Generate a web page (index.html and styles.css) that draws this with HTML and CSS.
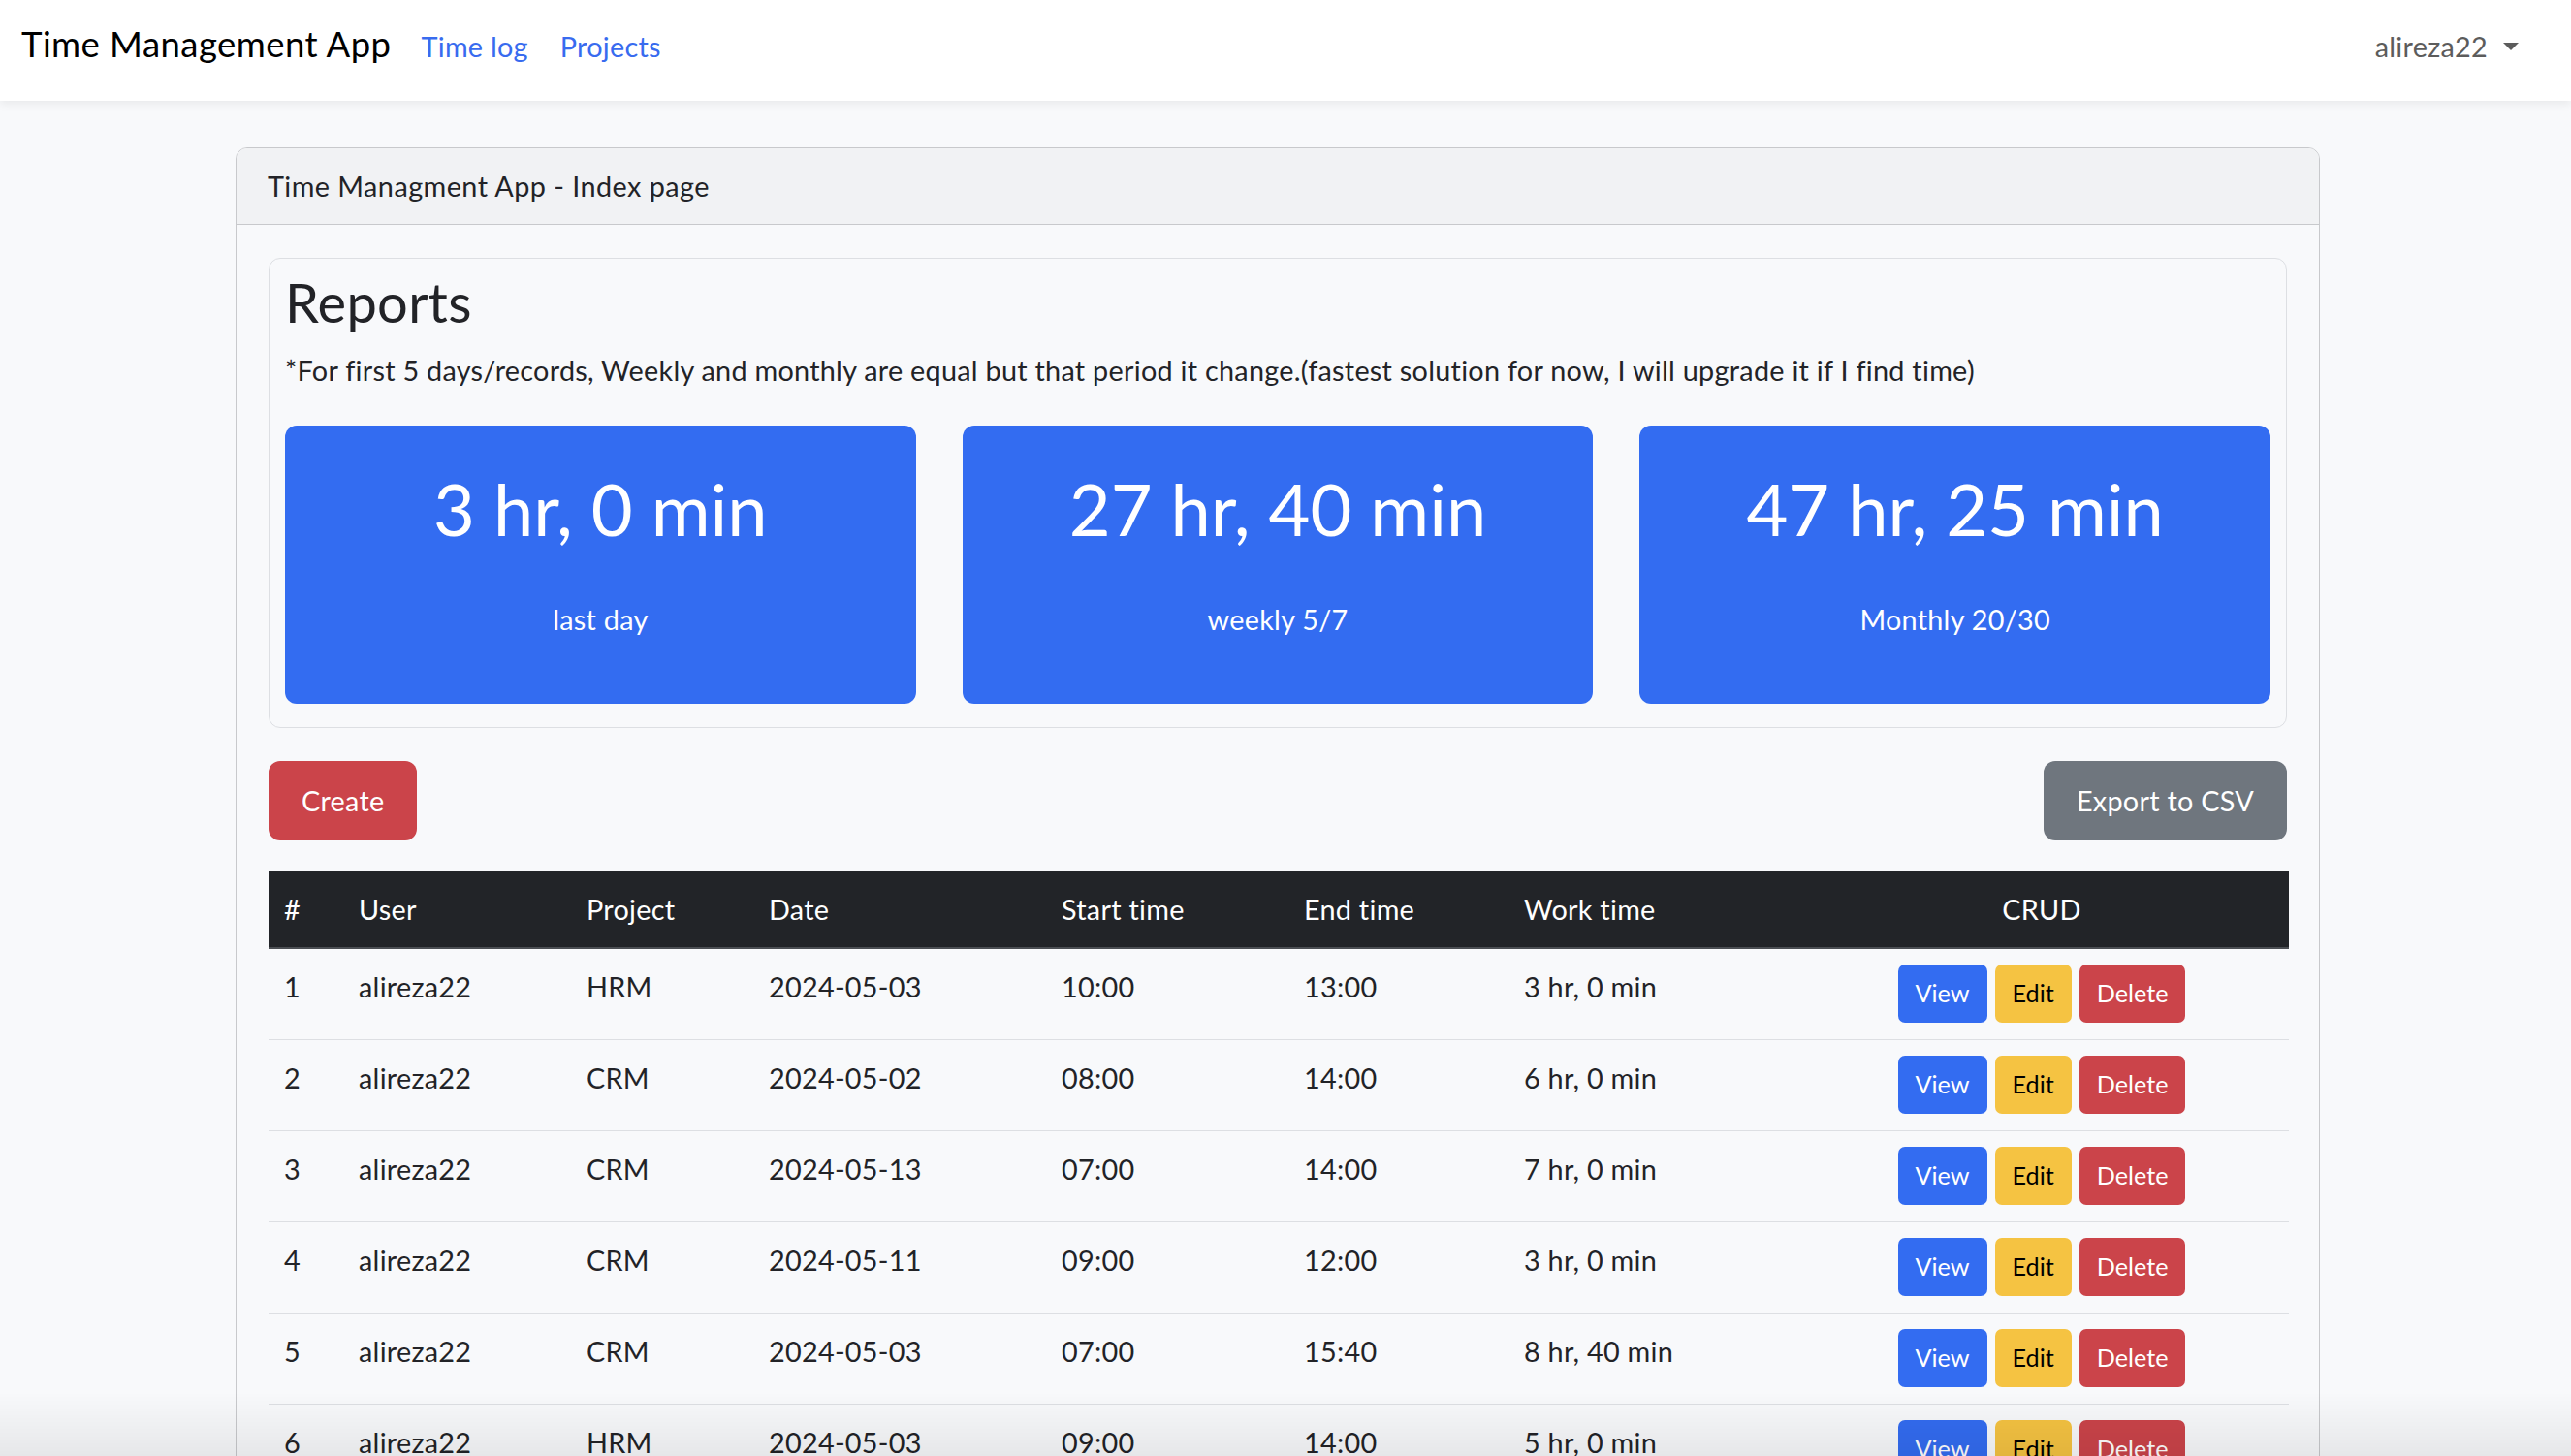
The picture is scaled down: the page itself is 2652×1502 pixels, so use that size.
FILE: index.html
```html
<!DOCTYPE html>
<html lang="en">
<head>
<meta charset="utf-8">
<title>Time Management App</title>
<link rel="stylesheet" href="styles.css">
</head>
<body>
<nav class="navbar">
  <a class="brand" href="#">Time Management App</a>
  <a class="nav-link" href="#">Time log</a>
  <a class="nav-link" href="#">Projects</a>
  <a class="user-toggle" href="#">alireza22</a>
</nav>

<main class="main">
  <section class="card">
    <div class="card-header">Time Managment App - Index page</div>
    <div class="card-body">
      <div class="reports">
        <h3 class="reports-title">Reports</h3>
        <p class="reports-note">*For first 5 days/records, Weekly and monthly are equal but that period it change.(fastest solution for now, I will upgrade it if I find time)</p>
        <div class="stats">
          <div class="stat">
            <div class="stat-value">3 hr, 0 min</div>
            <div class="stat-label">last day</div>
          </div>
          <div class="stat">
            <div class="stat-value">27 hr, 40 min</div>
            <div class="stat-label">weekly 5/7</div>
          </div>
          <div class="stat">
            <div class="stat-value">47 hr, 25 min</div>
            <div class="stat-label">Monthly 20/30</div>
          </div>
        </div>
      </div>

      <div class="actions">
        <a class="btn btn-danger" href="#">Create</a>
        <a class="btn btn-secondary" href="#">Export to CSV</a>
      </div>

      <table class="table">
        <colgroup>
          <col class="c-num"><col class="c-user"><col class="c-project"><col class="c-date">
          <col class="c-start"><col class="c-end"><col class="c-work"><col class="c-crud">
        </colgroup>
        <thead>
          <tr><th>#</th><th>User</th><th>Project</th><th>Date</th><th>Start time</th><th>End time</th><th>Work time</th><th class="center">CRUD</th></tr>
        </thead>
        <tbody>
          <tr><td>1</td><td>alireza22</td><td>HRM</td><td>2024-05-03</td><td>10:00</td><td>13:00</td><td>3 hr, 0 min</td>
            <td><div class="crud"><a class="sbtn sbtn-view" href="#">View</a><a class="sbtn sbtn-edit" href="#">Edit</a><a class="sbtn sbtn-delete" href="#">Delete</a></div></td></tr>
          <tr><td>2</td><td>alireza22</td><td>CRM</td><td>2024-05-02</td><td>08:00</td><td>14:00</td><td>6 hr, 0 min</td>
            <td><div class="crud"><a class="sbtn sbtn-view" href="#">View</a><a class="sbtn sbtn-edit" href="#">Edit</a><a class="sbtn sbtn-delete" href="#">Delete</a></div></td></tr>
          <tr><td>3</td><td>alireza22</td><td>CRM</td><td>2024-05-13</td><td>07:00</td><td>14:00</td><td>7 hr, 0 min</td>
            <td><div class="crud"><a class="sbtn sbtn-view" href="#">View</a><a class="sbtn sbtn-edit" href="#">Edit</a><a class="sbtn sbtn-delete" href="#">Delete</a></div></td></tr>
          <tr><td>4</td><td>alireza22</td><td>CRM</td><td>2024-05-11</td><td>09:00</td><td>12:00</td><td>3 hr, 0 min</td>
            <td><div class="crud"><a class="sbtn sbtn-view" href="#">View</a><a class="sbtn sbtn-edit" href="#">Edit</a><a class="sbtn sbtn-delete" href="#">Delete</a></div></td></tr>
          <tr><td>5</td><td>alireza22</td><td>CRM</td><td>2024-05-03</td><td>07:00</td><td>15:40</td><td>8 hr, 40 min</td>
            <td><div class="crud"><a class="sbtn sbtn-view" href="#">View</a><a class="sbtn sbtn-edit" href="#">Edit</a><a class="sbtn sbtn-delete" href="#">Delete</a></div></td></tr>
          <tr><td>6</td><td>alireza22</td><td>HRM</td><td>2024-05-03</td><td>09:00</td><td>14:00</td><td>5 hr, 0 min</td>
            <td><div class="crud"><a class="sbtn sbtn-view" href="#">View</a><a class="sbtn sbtn-edit" href="#">Edit</a><a class="sbtn sbtn-delete" href="#">Delete</a></div></td></tr>
        </tbody>
      </table>
    </div>
  </section>
</main>

<div class="bottom-fade"></div>
</body>
</html>
```

FILE: styles.css
```css
* { box-sizing: border-box; }

html, body {
  margin: 0;
  padding: 0;
}

body {
  background: #f8f9fb;
  color: #222327;
  font-family: Lato, "Noto Sans", "Liberation Sans", sans-serif;
  font-size: 28.8px;
  line-height: 1.6;
  letter-spacing: 0.27px;
}

a { text-decoration: none; }

/* ---------- navbar ---------- */
.navbar {
  height: 104px;
  background: #ffffff;
  box-shadow: 0 4px 8px rgba(0, 0, 0, 0.06);
  display: flex;
  align-items: baseline;
  padding: 16px 54px 0 22px;
  position: relative;
  z-index: 2;
}

.brand {
  font-size: 36.5px;
  letter-spacing: 0.45px;
  color: #000;
  margin-right: 31px;
}

.nav-link {
  color: #386bef;
  margin-right: 33px;
}

.user-toggle {
  margin-left: auto;
  color: #5c5c5c;
  display: inline-flex;
  align-items: center;
}

.user-toggle::after {
  content: "";
  display: inline-block;
  margin-left: 16px;
  border-top: 8px solid #5c5c5c;
  border-left: 8px solid transparent;
  border-right: 8px solid transparent;
}

/* ---------- main card ---------- */
.main {
  padding: 48px 0 0 243px;
}

.card {
  width: 2150px;
  border: 1px solid #c8c9cc;
  border-radius: 12px;
  background: #f8f9fb;
}

.card-header {
  background: #f1f2f4;
  border-bottom: 1px solid #c8c9cc;
  border-radius: 11px 11px 0 0;
  padding: 16px 32px;
  color: #222327;
  letter-spacing: 0.45px;
}

.card-body {
  padding: 34px 33px 40px;
}

/* ---------- reports ---------- */
.reports {
  border: 1px solid #dddfe3;
  border-radius: 12px;
  padding: 16px 16px 24px;
}

.reports-title {
  font-size: 56px;
  font-weight: 400;
  line-height: 1.05;
  letter-spacing: 0.3px;
  margin: 0 0 17px;
  color: #222327;
}

.reports-note {
  margin: 0 0 34px;
}

.stats {
  display: grid;
  grid-template-columns: repeat(3, 1fr);
  gap: 48px;
}

.stat {
  background: #336cf1;
  border-radius: 12px;
  height: 287px;
  color: #ffffff;
  text-align: center;
  padding-top: 42px;
}

.stat-value {
  font-size: 74px;
  line-height: 1.2;
  letter-spacing: 0;
}

.stat-label {
  margin-top: 46px;
}

/* ---------- actions ---------- */
.actions {
  display: flex;
  justify-content: space-between;
  margin: 34px 0 32px;
}

.btn {
  display: inline-block;
  border-radius: 12px;
  padding: 18px 34px;
  line-height: 46px;
  color: #ffffff;
}

.btn-danger { background: #cb444a; }
.btn-secondary { background: #6f767e; }

/* ---------- table ---------- */
.table {
  width: 100%;
  border-collapse: collapse;
  table-layout: fixed;
}

.c-num { width: 77px; }
.c-user { width: 235px; }
.c-project { width: 188px; }
.c-date { width: 302px; }
.c-start { width: 250px; }
.c-end { width: 227px; }
.c-work { width: 295px; }
.c-crud { width: 510px; }

.table th {
  background: #222428;
  color: #ffffff;
  font-weight: 400;
  text-align: left;
  padding: 16px;
  line-height: 46px;
  border-bottom: 2px solid #4b4e53;
}

.table th.center { text-align: center; }

.table td {
  padding: 16px 16px 17px;
  line-height: 46px;
  vertical-align: top;
  border-bottom: 1px solid #dddfe3;
  white-space: nowrap;
}

.crud {
  display: flex;
  justify-content: center;
  gap: 8px;
}

.sbtn {
  display: inline-block;
  height: 60px;
  padding: 9px 18px;
  font-size: 25.2px;
  line-height: 40px;
  letter-spacing: 0;
  border-radius: 7px;
}

.sbtn-view { background: #336cf1; color: #ffffff; }
.sbtn-edit { background: #f5c342; color: #000000; }
.sbtn-delete { background: #cb444a; color: #ffffff; }

/* ---------- bottom fade overlay ---------- */
.bottom-fade {
  position: fixed;
  left: 0;
  right: 0;
  bottom: 0;
  height: 66px;
  background: linear-gradient(to bottom, rgba(0, 0, 0, 0), rgba(0, 0, 0, 0.07));
  pointer-events: none;
}
```
